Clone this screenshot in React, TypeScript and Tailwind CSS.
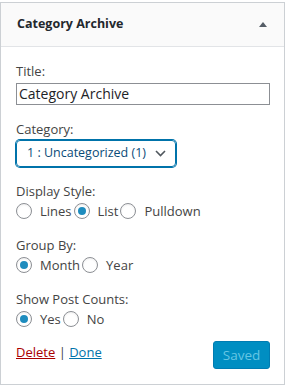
import { useState } from 'react';

const font = { fontFamily: '"Open Sans", "Liberation Sans", Arial, sans-serif' };

interface RadioProps {
  label: string;
  checked: boolean;
  onChange: () => void;
}

const Radio = ({ label, checked, onChange }: RadioProps) => (
  <label className="inline-flex items-center cursor-pointer" onClick={onChange}>
    <span className="flex items-center justify-center w-4 h-4 rounded-full border border-[#8c8f94] bg-white shadow-[inset_0_1px_2px_rgba(0,0,0,0.07)] mr-2">
      {checked && <span className="w-2 h-2 rounded-full bg-[#1e8cbe]" />}
    </span>
    <span className="text-[13px] leading-5 text-[#444]">{label}</span>
  </label>
);

interface RadioGroupProps {
  title: string;
  options: string[];
  value: string;
  onChange: (v: string) => void;
}

const RadioGroup = ({ title, options, value, onChange }: RadioGroupProps) => (
  <div className="mt-[14px]">
    <div className="text-[13px] leading-5 text-[#444]">{title}</div>
    <div className="flex items-center h-5 gap-[2px]">
      {options.map((o) => (
        <Radio key={o} label={o} checked={value === o} onChange={() => onChange(o)} />
      ))}
    </div>
  </div>
);

const App = () => {
  const [title, setTitle] = useState('Category Archive');
  const [style, setStyle] = useState('List');
  const [group, setGroup] = useState('Month');
  const [counts, setCounts] = useState('Yes');

  return (
    <div className="w-[288px] h-[388px] bg-white pt-[2px]" style={font}>
      <div className="w-[285px] border border-[#ccd0d4] bg-white">
        <div className="h-[44px] flex items-center justify-between pl-4 pr-[17px] bg-[#fafafa] border-b border-[#e2e4e7]">
          <span className="text-[12.5px] font-bold text-[#23282d]">Category Archive</span>
          <svg width="8" height="5" viewBox="0 0 8 5" className="mt-[-1px]">
            <polygon points="4,0 8,5 0,5" fill="#555d66" />
          </svg>
        </div>
        <div className="pl-[15px] pr-[14px] pt-[14px] pb-[15px]">
          <div className="text-[13px] leading-5 text-[#444]">Title:</div>
          <input
            className="mt-[1px] w-full h-[22px] border border-[#8c8f94] px-[2px] text-[14px] text-[#1d2327] outline-none"
            value={title}
            onChange={(e) => setTitle(e.target.value)}
          />

          <div className="mt-[14px] text-[13px] leading-5 text-[#444]">Category:</div>
          <div className="mt-[1px] w-[160px] h-[27px] flex items-center justify-between pl-[10px] pr-[9px] rounded-[4px] border border-[#0073aa] shadow-[0_0_0_1px_#0073aa] text-[12.5px] text-[#0a4b78]">
            <span>1 : Uncategorized (1)</span>
            <svg width="11" height="7" viewBox="0 0 11 7">
              <polyline points="1,1 5.5,5.5 10,1" fill="none" stroke="#50575e" strokeWidth="1.6" />
            </svg>
          </div>

          <div className="mt-[1px]">
            <RadioGroup title="Display Style:" options={['Lines', 'List', 'Pulldown']} value={style} onChange={setStyle} />
          </div>
          <RadioGroup title="Group By:" options={['Month', 'Year']} value={group} onChange={setGroup} />
          <RadioGroup title="Show Post Counts:" options={['Yes', 'No']} value={counts} onChange={setCounts} />

          <div className="mt-[12px] flex items-start justify-between">
            <div className="text-[13px] leading-5 pt-[1px] text-[#444]">
              <a href="#" className="text-[#a00] underline">Delete</a>
              {' | '}
              <a href="#" className="text-[#0073aa] underline">Done</a>
            </div>
            <button
              disabled
              className="w-[57px] h-[28px] rounded-[3px] bg-[#008ec2] border border-[#007cb2] text-[13.5px] text-[#66c6e4]"
            >
              Saved
            </button>
          </div>
        </div>
      </div>
    </div>
  );
};

export default App;
